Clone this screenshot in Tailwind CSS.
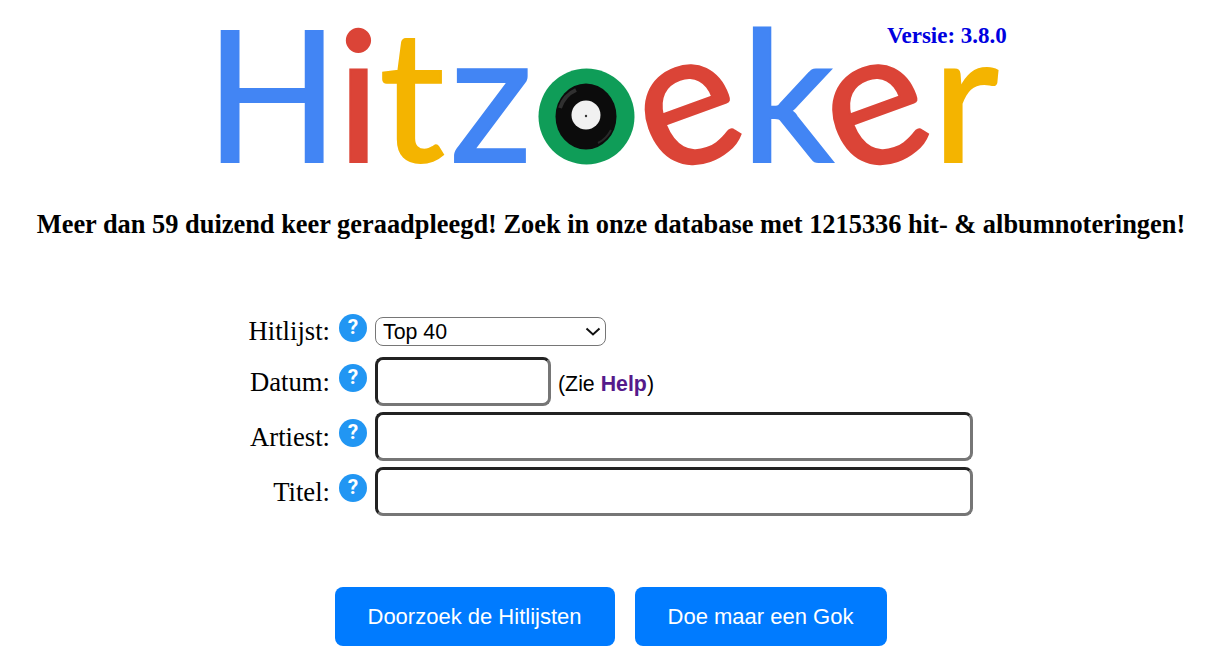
<!DOCTYPE html>
<html lang="nl">

<head>
    <meta charset="UTF-8">
    <meta name="viewport" content="width=device-width, initial-scale=1.0">
    <script src="https://cdn.jsdelivr.net/npm/@tailwindcss/browser@4"></script>
    <title>Hitzoeker</title>
</head>

<body class="bg-white text-black font-['Liberation_Serif',serif] overflow-hidden">
    <!-- logo -->
    <div class="relative h-[191px] w-full">
        <div class="flex items-start pl-[220px] pt-[1px] font-['Lato',sans-serif] text-[183px] leading-[180px] [-webkit-text-stroke:2px_currentColor] select-none">
            <span class="flex justify-center w-[104px] scale-x-[0.95] text-[#4285f4]">H</span>
            <span class="flex justify-center w-[17px] ml-[26px] text-[#db4437]">i</span>
            <span class="flex justify-center w-[58px] ml-[16px] text-[#f4b400]">t</span>
            <span class="flex justify-center w-[76px] ml-[12px] text-[#4285f4]">z</span>
            <svg class="ml-[9px] mt-[67px] shrink-0" width="97" height="97" viewBox="0 0 97 97">
                <circle cx="48.5" cy="48.5" r="48" fill="#0f9d58"/>
                <ellipse cx="48" cy="48.5" rx="30.5" ry="33" fill="#0c0c0c"/>
                <path d="M22 40 A28 30 0 0 1 38 22" stroke="#666" stroke-opacity=".4" stroke-width="4" fill="none"/>
                <path d="M73 62 A28 30 0 0 1 60 75" stroke="#555" stroke-opacity=".4" stroke-width="2" fill="none"/>
                <circle cx="48" cy="47" r="14.5" fill="#f1f1f1"/>
                <circle cx="48" cy="48" r="1.2" fill="#333"/>
            </svg>
            <span class="flex justify-center w-[88px] ml-[11px] -rotate-[20deg] scale-[1.04] origin-[50%_64%] text-[#db4437]">e</span>
            <span class="flex justify-center w-[81px] ml-[13px] text-[#4285f4]">k</span>
            <span class="flex justify-center w-[89px] ml-[5px] -rotate-[20deg] scale-[1.04] origin-[50%_64%] text-[#db4437]">e</span>
            <span class="flex justify-center w-[57px] ml-[15px] text-[#f4b400]">r</span>
        </div>
        <span class="absolute left-[887px] top-[24px] text-[23px] leading-6 font-bold text-[#0000e0]">Versie: 3.8.0</span>
    </div>

    <h2 class="mt-[18px] pl-[12px] text-center text-[26.4px] leading-[30px] font-bold whitespace-nowrap">Meer dan 59 duizend keer geraadpleegd! Zoek in onze database met 1215336 hit- &amp; albumnoteringen!</h2>

    <!-- zoekformulier -->
    <form class="mt-[78px] ml-[201px] grid grid-cols-[130px_28px_auto] gap-x-[8px] justify-start items-center text-[26.67px]">
        <label class="text-right pr-[1px] leading-7 h-[29px]">Hitlijst:</label>
        <span class="flex items-center justify-center size-[28px] rounded-full bg-[#2196f3] text-white font-['Roboto',sans-serif] font-bold text-[21px] -mt-[7px]">?</span>
        <div class="relative w-[231px] h-[29px]">
            <select class="block appearance-none w-full h-full border border-[#767676] rounded-[8px] bg-white pl-[7px] font-['Liberation_Sans',sans-serif] text-[21.33px] leading-6">
                <option>Top 40</option>
            </select>
            <svg class="absolute right-[5px] top-[10px] pointer-events-none" width="16" height="9" viewBox="0 0 16 9"><path d="M1.5 1.5 L8 7.5 L14.5 1.5" stroke="#111" stroke-width="2" fill="none"/></svg>
        </div>

        <label class="text-right pr-[1px] leading-7 mt-[11px]">Datum:</label>
        <span class="flex items-center justify-center size-[28px] rounded-full bg-[#2196f3] text-white font-['Roboto',sans-serif] font-bold text-[21px] mt-[4px]">?</span>
        <div class="flex items-center mt-[11px]">
            <input type="text" class="w-[176px] h-[49px] rounded-[8px] border-[3px] border-t-[#222] border-l-[#222] border-r-[#767676] border-b-[#767676] bg-white">
            <span class="ml-[7px] pt-[6px] font-['Liberation_Sans',sans-serif] text-[21.33px]">(Zie <a href="#" class="font-bold text-[#551a8b]">Help</a>)</span>
        </div>

        <label class="text-right pr-[1px] leading-7 mt-[6px]">Artiest:</label>
        <span class="flex items-center justify-center size-[28px] rounded-full bg-[#2196f3] text-white font-['Roboto',sans-serif] font-bold text-[21px] -mt-[1px]">?</span>
        <input type="text" class="w-[598px] h-[49px] mt-[6px] rounded-[8px] border-[3px] border-t-[#222] border-l-[#222] border-r-[#767676] border-b-[#767676] bg-white">

        <label class="text-right pr-[1px] leading-7 mt-[6px]">Titel:</label>
        <span class="flex items-center justify-center size-[28px] rounded-full bg-[#2196f3] text-white font-['Roboto',sans-serif] font-bold text-[21px] -mt-[1px]">?</span>
        <input type="text" class="w-[598px] h-[49px] mt-[6px] rounded-[8px] border-[3px] border-t-[#222] border-l-[#222] border-r-[#767676] border-b-[#767676] bg-white">
    </form>

    <div class="mt-[71px] flex justify-center gap-[20px] pl-[11px] font-['Liberation_Sans',sans-serif] text-[22px] text-white">
        <button class="w-[280px] h-[59px] rounded-[8px] bg-[#007bff]">Doorzoek de Hitlijsten</button>
        <button class="w-[252px] h-[59px] rounded-[8px] bg-[#007bff]">Doe maar een Gok</button>
    </div>
</body>

</html>
